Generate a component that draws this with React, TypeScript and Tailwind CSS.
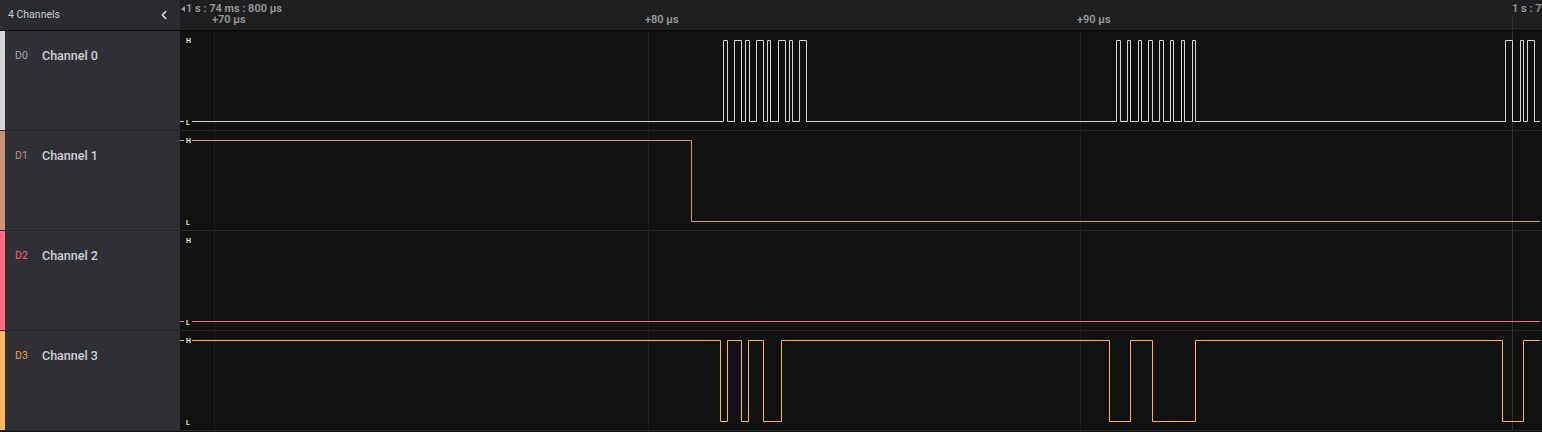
import { ChevronLeft } from "lucide-react";

const WIDTH = 1362;
const END = 1360;
const HIGH = 9.5;
const LOW = 90.5;
const GRID = [34, 468, 900, 1332];

type Channel = {
  id: string;
  name: string;
  strip: string;
  label: string;
  stroke: string;
  start: "H" | "L";
  edges: number[];
};

const channels: Channel[] = [
  {
    id: "D0",
    name: "Channel 0",
    strip: "bg-[#d6d6d6]",
    label: "text-[#a3a4a8]",
    stroke: "#d6d6d6",
    start: "L",
    edges: [
      723, 727, 734, 741, 745, 749, 756, 763, 767, 770, 778, 785, 789, 792, 799, 806,
      1116, 1120, 1127, 1130, 1138, 1141, 1148, 1152, 1159, 1163, 1170, 1173, 1181, 1184,
      1192, 1195, 1505, 1512, 1520, 1523, 1527, 1534,
    ],
  },
  {
    id: "D1",
    name: "Channel 1",
    strip: "bg-[#c9957a]",
    label: "text-[#c58b70]",
    stroke: "#cf9a80",
    start: "H",
    edges: [691],
  },
  {
    id: "D2",
    name: "Channel 2",
    strip: "bg-[#ff6b80]",
    label: "text-[#f2657a]",
    stroke: "#ff7186",
    start: "L",
    edges: [],
  },
  {
    id: "D3",
    name: "Channel 3",
    strip: "bg-[#ffb35c]",
    label: "text-[#f0a246]",
    stroke: "#ffb45a",
    start: "H",
    edges: [720, 727, 741, 748, 763, 781, 1109, 1130, 1152, 1195, 1502, 1523],
  },
];

function buildPath(start: "H" | "L", edges: number[]) {
  let y = start === "H" ? HIGH : LOW;
  let d = `M0 ${y}`;
  for (const e of edges) {
    const x = e - 180 + 0.5;
    d += ` H${x}`;
    y = y === HIGH ? LOW : HIGH;
    d += ` V${y}`;
  }
  d += ` H${END}`;
  return d;
}

function Wave({ ch }: { ch: Channel }) {
  return (
    <svg width={WIDTH} height={99} viewBox={`0 0 ${WIDTH} 99`} className="block">
      {GRID.map((x, i) => (
        <line
          key={x}
          x1={x + 0.5}
          x2={x + 0.5}
          y1={0}
          y2={99}
          stroke={i === 3 ? "#303032" : "#1f1f21"}
          strokeWidth={1}
        />
      ))}
      <path d={buildPath(ch.start, ch.edges)} fill="none" stroke={ch.stroke} strokeWidth={1} />
      <rect x={4} y={5} width={8} height={9} fill="#111111" />
      <text x={6} y={12} fontSize={7} fontWeight={700} fill="#e6e6e6" fontFamily="Roboto, sans-serif">
        H
      </text>
      <rect x={4} y={86} width={8} height={9} fill="#111111" />
      <text x={6} y={94} fontSize={7} fontWeight={700} fill="#e6e6e6" fontFamily="Roboto, sans-serif">
        L
      </text>
    </svg>
  );
}

export default function App() {
  return (
    <div className="flex h-[432px] w-[1542px] flex-col overflow-hidden bg-[#111111] font-['Roboto',sans-serif]">
      <div className="flex h-[31px] shrink-0 border-b border-[#0b0b0c]">
        <div className="flex w-[180px] shrink-0 items-center justify-between bg-[#2a2b2f] pl-2 pr-[9px]">
          <span className="text-[10.5px] text-[#c9cacd]">4 Channels</span>
          <ChevronLeft size={14} strokeWidth={2.6} className="text-[#e0e0e0]" />
        </div>
        <div className="relative flex-1 bg-[#1e1e20] text-[11px] font-semibold text-[#9a9a9c]">
          <div className="absolute left-[1px] top-[2px] flex items-center gap-[1px] leading-[13px]">
            <svg width="4" height="6" viewBox="0 0 4 6">
              <path d="M4 0 L0 3 L4 6 Z" fill="#9a9a9c" />
            </svg>
            <span>1 s : 74 ms : 800 μs</span>
          </div>
          <span className="absolute left-[32px] top-[13px] leading-[13px]">+70 μs</span>
          <span className="absolute left-[465px] top-[13px] leading-[13px]">+80 μs</span>
          <span className="absolute left-[897px] top-[13px] leading-[13px]">+90 μs</span>
          <span className="absolute left-[1332px] top-[2px] leading-[13px]">1 s : 7</span>
          <div className="absolute left-[1332px] top-[15px] h-[15px] w-px bg-[#303032]" />
        </div>
      </div>
      {channels.map((ch) => (
        <div key={ch.id} className="flex h-[100px] shrink-0 border-b border-[#25262a]">
          <div className="flex w-[180px] shrink-0 bg-[#2f3035]">
            <div className={`w-[5px] ${ch.strip}`} />
            <div className="flex h-[50px] items-center pl-[10px]">
              <span className={`w-[27px] text-[10.5px] ${ch.label}`}>{ch.id}</span>
              <span className="text-[12.5px] font-medium text-[#d0d1d4]">{ch.name}</span>
            </div>
          </div>
          <div className="flex-1 bg-[#111111]">
            <Wave ch={ch} />
          </div>
        </div>
      ))}
    </div>
  );
}
